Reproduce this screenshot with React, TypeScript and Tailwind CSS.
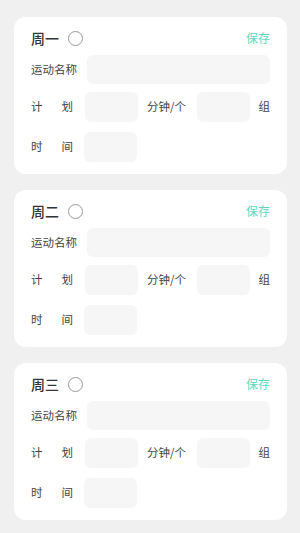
const DAYS = ['周一', '周二', '周三'];

const font = { fontFamily: '"Noto Sans CJK SC", "Noto Sans", sans-serif' };

function DayCard({ day }: { day: string }) {
  return (
    <div className="bg-white rounded-[12px] h-[157px] pl-[17px] pr-[17px] pt-[11px]">
      {/* header */}
      <div className="flex items-center h-[20px]">
        <span className="text-[14px] font-medium text-[#333] leading-none">{day}</span>
        <span className="ml-[9px] w-[15px] h-[15px] shrink-0 rounded-full border-[1.5px] border-[#999]" />
        <span className="ml-auto text-[12px] text-[#5fd8b9] leading-none">保存</span>
      </div>

      {/* name */}
      <div className="flex items-center mt-[7px] h-[29px]">
        <span className="text-[11.5px] text-[#444] w-[56px] shrink-0 leading-none">运动名称</span>
        <div className="flex-1 h-full bg-[#f6f6f6] rounded-[6px]" />
      </div>

      {/* plan */}
      <div className="flex items-center mt-[8px] h-[30px]">
        <span className="text-[11.5px] text-[#444] w-[42px] shrink-0 flex justify-between leading-none">
          <span>计</span>
          <span>划</span>
        </span>
        <div className="ml-[12px] w-[53px] h-full bg-[#f6f6f6] rounded-[6px]" />
        <span className="ml-[9px] text-[11.5px] text-[#444] leading-none">分钟/个</span>
        <div className="ml-[11px] w-[53px] h-full bg-[#f6f6f6] rounded-[6px]" />
        <span className="ml-auto text-[11.5px] text-[#444] leading-none">组</span>
      </div>

      {/* time */}
      <div className="flex items-center mt-[10px] h-[30px]">
        <span className="text-[11.5px] text-[#444] w-[42px] shrink-0 flex justify-between leading-none">
          <span>时</span>
          <span>间</span>
        </span>
        <div className="ml-[11px] w-[53px] h-full bg-[#f6f6f6] rounded-[6px]" />
      </div>
    </div>
  );
}

export default function App() {
  return (
    <div className="w-[300px] h-[533px] bg-[#f0f0f0] overflow-hidden pl-[14px] pr-[13px] pt-[17px] flex flex-col gap-[16px]" style={font}>
      {DAYS.map(d => (
        <DayCard key={d} day={d} />
      ))}
    </div>
  );
}
